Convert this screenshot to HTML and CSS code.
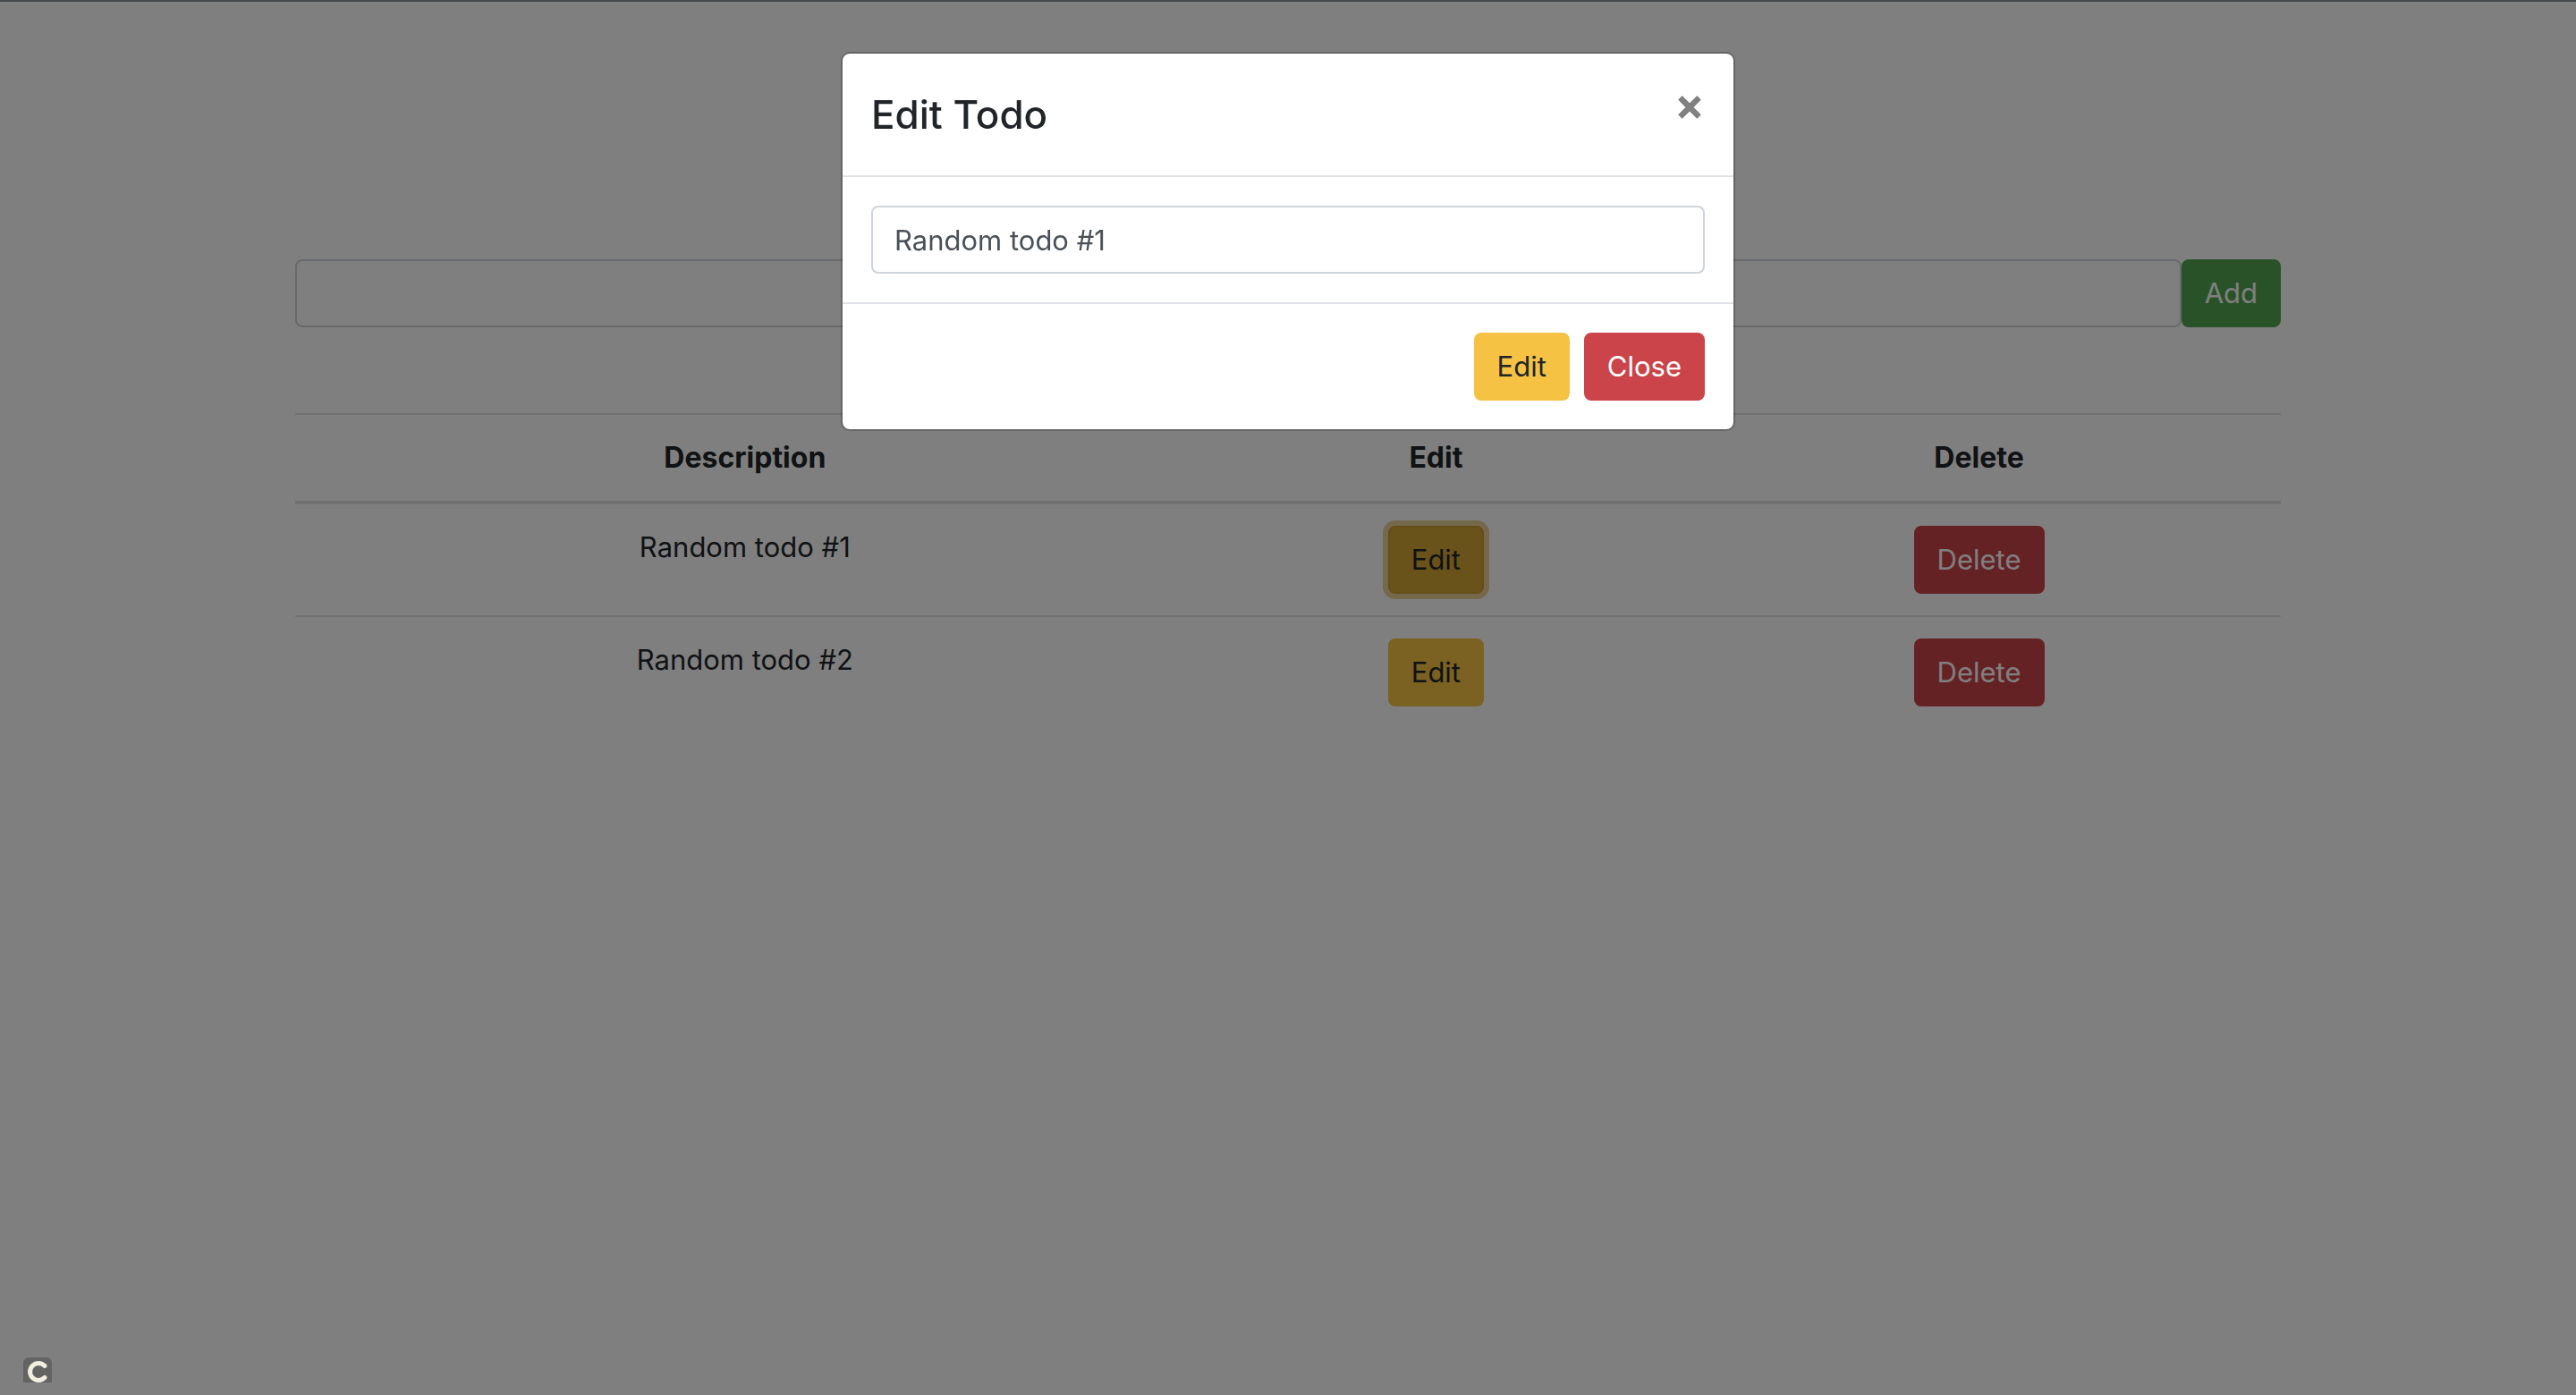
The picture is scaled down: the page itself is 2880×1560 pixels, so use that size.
FILE: index.html
```html
<!DOCTYPE html>
<html lang="en">
<head>
  <meta charset="utf-8">
  <meta name="viewport" content="width=device-width, initial-scale=1">
  <title>Todo List</title>
  <link rel="stylesheet" href="styles.css">
</head>
<body>
  <main class="container">
    <form class="add-form">
      <input class="form-control" type="text" aria-label="New todo">
      <button class="btn btn-success" type="button">Add</button>
    </form>

    <table class="table">
      <colgroup>
        <col class="col-description">
        <col class="col-edit">
        <col class="col-delete">
      </colgroup>
      <thead>
        <tr>
          <th scope="col">Description</th>
          <th scope="col">Edit</th>
          <th scope="col">Delete</th>
        </tr>
      </thead>
      <tbody>
        <tr>
          <td>Random todo #1</td>
          <td><button class="btn btn-warning active" type="button">Edit</button></td>
          <td><button class="btn btn-danger" type="button">Delete</button></td>
        </tr>
        <tr>
          <td>Random todo #2</td>
          <td><button class="btn btn-warning" type="button">Edit</button></td>
          <td><button class="btn btn-danger" type="button">Delete</button></td>
        </tr>
      </tbody>
    </table>
  </main>

  <div class="backdrop">
    <section class="modal" role="dialog" aria-modal="true" aria-labelledby="modal-title">
      <header class="modal-header">
        <h4 class="modal-title" id="modal-title">Edit Todo</h4>
        <button class="close" type="button" aria-label="Close dialog">×</button>
      </header>
      <div class="modal-body">
        <input class="form-control" type="text" aria-labelledby="modal-title" value="Random todo #1">
      </div>
      <footer class="modal-footer">
        <button class="btn btn-warning" type="button">Edit</button>
        <button class="btn btn-danger" type="button">Close</button>
      </footer>
    </section>
  </div>

  <svg class="badge" viewBox="0 0 32 28" aria-hidden="true">
    <path class="badge-tile" d="M0 28V6a6 6 0 0 1 6-6h20a6 6 0 0 1 6 6v22z"/>
    <path class="badge-mark" d="M24 9.500A9.500 9.500 0 1 0 24 22.500"/>
  </svg>
</body>
</html>
```
FILE: styles.css
```css
* {
  box-sizing: border-box;
}

body {
  margin: 0;
  padding-top: 2px;
  background: #fff;
  color: #212529;
  font-family: Inter, "Liberation Sans", sans-serif;
  font-size: 31px;
  line-height: 48px;
}

.container {
  max-width: 2280px;
  margin: 0 auto;
  padding: 288px 30px 0;
}

/* Controls */

.form-control {
  display: block;
  width: 100%;
  min-width: 0;
  height: 76px;
  padding: 12px 24px;
  border: 2px solid #ced4da;
  border-radius: 8px;
  background: #fff;
  color: #495057;
  font: inherit;
}

.btn {
  flex: none;
  padding: 12px 24px;
  border: 2px solid transparent;
  border-radius: 8px;
  font: inherit;
  vertical-align: top;
  cursor: pointer;
}

.btn-success {
  border-color: #53a451;
  background: #53a451;
  color: #fff;
}

.btn-danger {
  border-color: #cb444a;
  background: #cb444a;
  color: #fff;
}

.btn-warning {
  border-color: #f6c244;
  background: #f6c244;
  color: #212529;
}

.btn-warning.active {
  border-color: #cb9b2f;
  background: #d4a437;
  box-shadow: 0 0 0 6px rgba(213, 166, 52, 0.5);
}

/* Todo list */

.add-form {
  display: flex;
  margin-bottom: 96px;
}

.table {
  width: 100%;
  border-collapse: separate;
  border-spacing: 0;
  table-layout: fixed;
  text-align: center;
}

.col-description {
  width: 45.3%;
}

.col-edit {
  width: 24.3%;
}

.col-delete {
  width: 30.4%;
}

.table th,
.table td {
  padding: 24px;
  vertical-align: top;
}

.table th {
  border-top: 2px solid #dee2e6;
  border-bottom: 4px solid #dee2e6;
  font-size: 32px;
  font-weight: 700;
}

.table tbody tr + tr td {
  border-top: 2px solid #dee2e6;
}

/* Dialog */

.backdrop {
  position: fixed;
  inset: 0;
  padding: 56px 16px;
  border-top: 2px solid #45494b;
  background: rgba(0, 0, 0, 0.5);
  overflow: auto;
}

.modal {
  max-width: 1000px;
  margin: 0 auto;
  border: 2px solid rgba(0, 0, 0, 0.2);
  border-radius: 10px;
  background: #fff;
  background-clip: padding-box;
}

.modal-header {
  display: flex;
  align-items: flex-start;
  justify-content: space-between;
  padding: 32px;
  border-bottom: 2px solid #dee2e6;
}

.modal-title {
  margin: 0;
  font-size: 44px;
  font-weight: 500;
  line-height: 72px;
}

.close {
  margin: -32px;
  padding: 32px;
  border: 0;
  background: transparent;
  color: #808080;
  font: inherit;
  font-size: 50px;
  font-weight: 700;
  line-height: 48px;
  cursor: pointer;
}

.modal-body {
  padding: 32px;
}

.modal-footer {
  display: flex;
  justify-content: flex-end;
  gap: 16px;
  padding: 32px;
  border-top: 2px solid #dee2e6;
}

/* Corner badge */

.badge {
  position: fixed;
  bottom: 14px;
  left: 26px;
  width: 32px;
  height: 28px;
}

.badge-tile {
  fill: #636363;
}

.badge-mark {
  fill: none;
  stroke: #f1eee0;
  stroke-width: 5;
  stroke-linecap: round;
}
```
